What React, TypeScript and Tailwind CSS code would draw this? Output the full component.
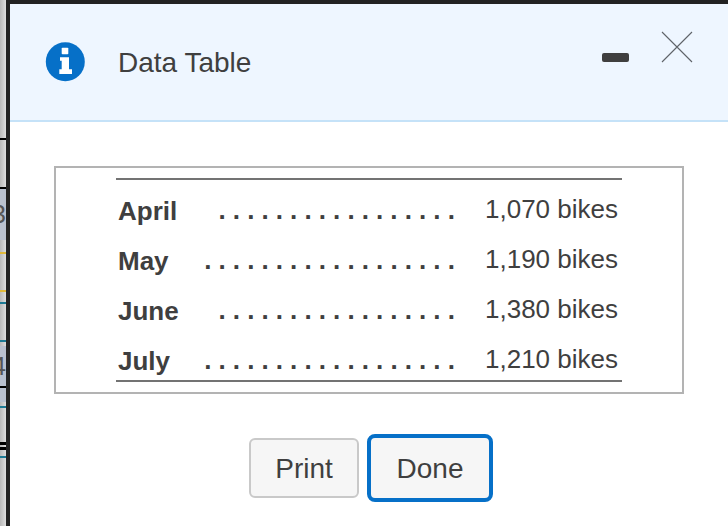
import React from 'react';

const rows = [
  { month: 'April', dots: '.................', value: '1,070 bikes' },
  { month: 'May', dots: '..................', value: '1,190 bikes' },
  { month: 'June', dots: '.................', value: '1,380 bikes' },
  { month: 'July', dots: '..................', value: '1,210 bikes' },
];

const BackgroundStrip = () => (
  <div className="w-[6px] h-full flex flex-col shrink-0 overflow-hidden bg-gradient-to-r from-[#b9b9b9] to-[#dedede]">
    <div className="h-[138px] shrink-0" />
    <div className="h-[2px] shrink-0 bg-black" />
    <div className="h-[47px] shrink-0" />
    <div className="h-[2px] shrink-0 bg-black" />
    <div className="h-[51px] shrink-0 bg-[#b9c1cf] flex justify-end text-[26px] leading-[51px] text-[#555555]">
      <span className="shrink-0">3</span>
    </div>
    <div className="h-[12px] shrink-0" />
    <div className="h-[2px] shrink-0 bg-[#e0b93a]" />
    <div className="h-[36px] shrink-0" />
    <div className="h-[2px] shrink-0 bg-[#e0b93a]" />
    <div className="h-[10px] shrink-0" />
    <div className="h-[2px] shrink-0 bg-[#1d7a94]" />
    <div className="h-[36px] shrink-0" />
    <div className="h-[2px] shrink-0 bg-[#1d7a94]" />
    <div className="h-[4px] shrink-0" />
    <div className="h-[40px] shrink-0 bg-[#b9c1cf] flex justify-end text-[26px] leading-[40px] text-[#555555]">
      <span className="shrink-0">4</span>
    </div>
    <div className="h-[2px] shrink-0 bg-black" />
    <div className="h-[14px] shrink-0 bg-[#b9c1cf]" />
    <div className="h-[4px] shrink-0" />
    <div className="h-[2px] shrink-0 bg-[#1d7a94]" />
    <div className="h-[34px] shrink-0" />
    <div className="h-[3px] shrink-0 bg-black" />
    <div className="h-[2px] shrink-0" />
    <div className="h-[3px] shrink-0 bg-black" />
    <div className="h-[6px] shrink-0" />
    <div className="h-[2px] shrink-0 bg-[#1d7a94]" />
  </div>
);

const InfoIcon = () => (
  <svg width="40" height="40" viewBox="0 0 40 40" className="shrink-0">
    <circle cx="20.3" cy="19.7" r="19.5" fill="#0670c8" />
    <rect x="16.7" y="5.7" width="6.6" height="6.6" rx="0.8" fill="#fff" />
    <path d="M15 15.3h9v12h3v4.7H14.3v-4.7h2.4v-8.6H15z" fill="#fff" />
  </svg>
);

const CloseIcon = () => (
  <svg width="32" height="32" viewBox="0 0 32 32" className="mt-[27px] ml-[32px] shrink-0">
    <path d="M1 1l30 30M31 1L1 31" fill="none" stroke="#5f6368" strokeWidth="1.1" />
  </svg>
);

export default function App() {
  return (
    <div className="w-[728px] h-[526px] overflow-hidden flex bg-white text-[#3f3f3f] font-['Liberation_Sans',Arial,sans-serif]">
      <BackgroundStrip />
      <div className="w-[4px] h-full shrink-0 bg-[#222222]" />
      <div className="flex-1 flex flex-col min-w-0">
        <div className="h-[4px] shrink-0 bg-[#222222]" />
        <header className="h-[118px] shrink-0 flex bg-[#eef6ff] border-b-2 border-[#c5e2f8] pl-[35px]">
          <div className="mt-[38px] h-[40px] flex items-center">
            <InfoIcon />
            <h1 className="ml-[33px] mt-[2px] text-[28px] leading-[40px]">Data Table</h1>
          </div>
          <div className="ml-[351px] flex items-start">
            <div className="mt-[49px] w-[27px] h-[9px] rounded-[2px] bg-[#3f3f3f]" />
            <CloseIcon />
          </div>
        </header>

        <main className="flex-1 flex flex-col items-start pl-[44px] pt-[44px]">
          <div className="w-[630px] h-[228px] border-2 border-[#b3b3b3] pl-[60px] pt-[10px]">
            <div className="w-[506px] h-[204px] border-y-2 border-[#737373] pt-[5px]">
              {rows.map((row) => (
                <div key={row.month} className="h-[50px] flex items-center text-[26px] leading-[50px]">
                  <span className="ml-[2px] mt-[2px] font-bold">{row.month}</span>
                  <span className="ml-auto font-bold tracking-[7.1px] -mr-[6px]">{row.dots}</span>
                  <span className="ml-[29px] w-[137px] -mt-[2px]">{row.value}</span>
                </div>
              ))}
            </div>
          </div>

          <div className="mt-[40px] ml-[195px] flex items-center gap-[8px] text-[28px]">
            <button className="w-[110px] h-[60px] rounded-[6px] border-2 border-[#c9c9c9] bg-[#f6f6f6] pt-[1px]">Print</button>
            <button className="w-[126px] h-[68px] rounded-[8px] border-4 border-[#0670c8] bg-[#f6f6f6] pt-[1px]">Done</button>
          </div>
        </main>
      </div>
    </div>
  );
}
